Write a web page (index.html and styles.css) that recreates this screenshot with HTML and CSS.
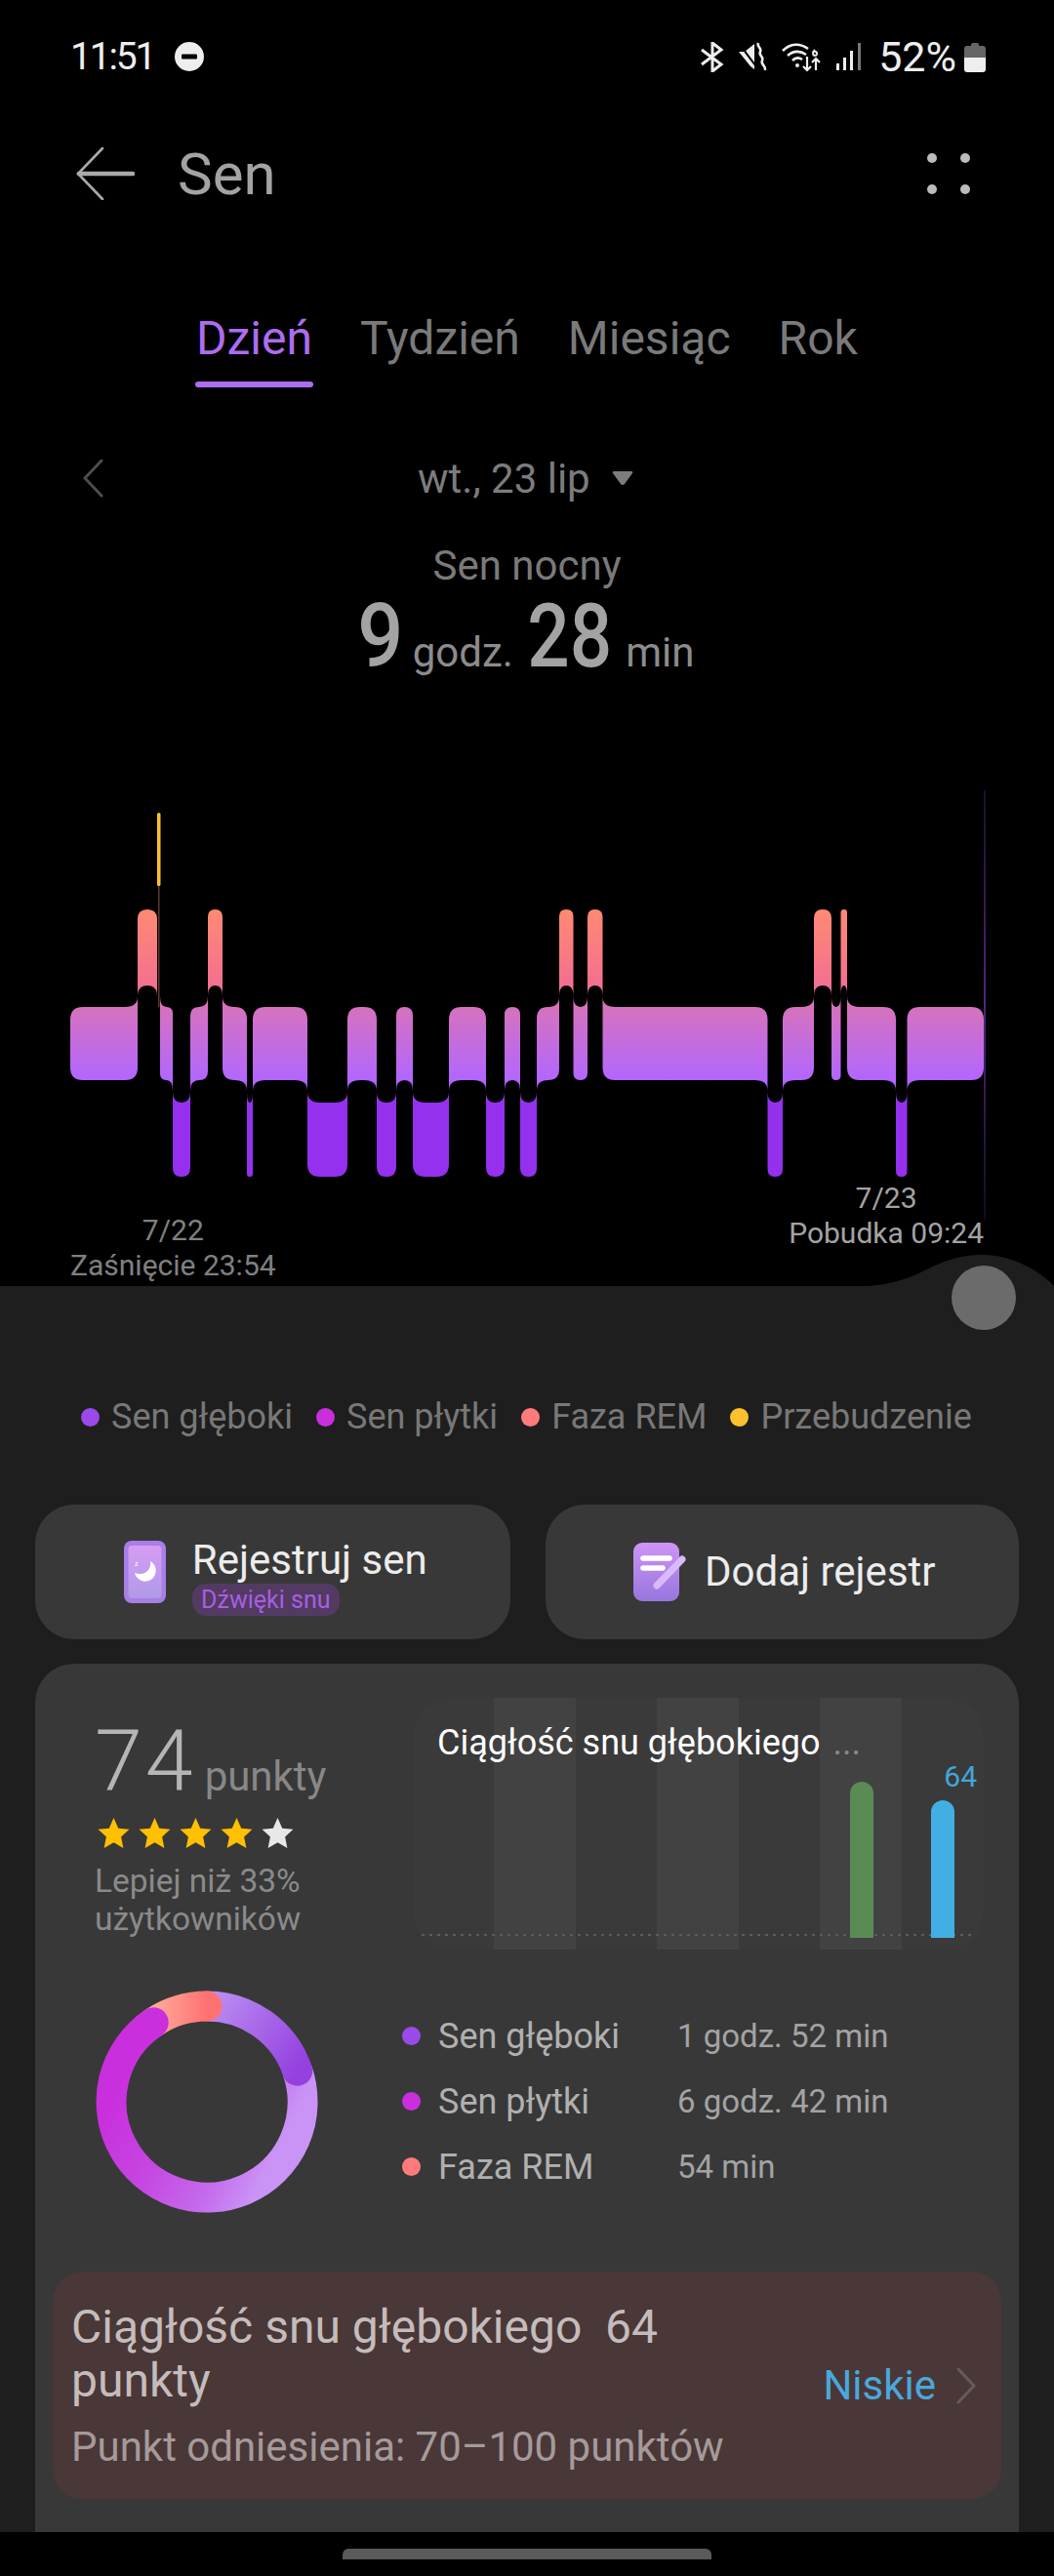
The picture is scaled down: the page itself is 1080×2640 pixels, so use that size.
FILE: index.html
```html
<!DOCTYPE html>
<html lang="pl">
<head>
    <meta charset="UTF-8">
    <meta name="viewport" content="width=device-width, initial-scale=1.0">
    <title>Sen</title>
    <link rel="stylesheet" href="styles.css">
</head>
<body>
<div class="app">

    <!-- pasek stanu -->
    <div class="status">
        <span class="clock">11:51</span>
        <svg class="ic-dnd" width="30" height="30" viewBox="0 0 30 30"><circle cx="15" cy="15" r="15" fill="#eee"/><rect x="7" y="12.5" width="16" height="5" rx="1" fill="#000"/></svg>
        <div class="status-right">
            <svg width="27" height="31" viewBox="0 0 27 31" fill="none" stroke="#eee" stroke-width="3"><path d="M3 8l20 15-9 7V1l9 7L3 23"/></svg>
            <svg width="30" height="30" viewBox="0 0 30 30"><path d="M0 10h6l10-8v26l-4-3z" fill="#eee"/><path d="M2 4l18 24" stroke="#000" stroke-width="2"/><path d="M20 1c-2 4 4 5 2 9s4 5 2 9 4 5 3 10" fill="none" stroke="#eee" stroke-width="2.6"/></svg>
            <svg width="42" height="32" viewBox="0 0 42 32" fill="none" stroke="#eee" stroke-width="2.6"><path d="M1 10c8-8 18-8 26-2M6 15c6-5 13-5 19-1M11 20c3-3 7-3 10-1"/><circle cx="16" cy="25" r="2" fill="#eee" stroke="none"/><path d="M26 16v14m-4-4l4 4 4-4M35 30V18m-4 4l4-4 4 4" stroke-width="2.2"/><path d="M34 9c-3 3-2 6 0 6s3-3 1-4-3 0-3 1" stroke-width="2"/></svg>
            <svg width="26" height="30" viewBox="0 0 26 30"><rect x="0" y="22" width="3" height="7" fill="#eee"/><rect x="7" y="16" width="3" height="13" fill="#eee"/><rect x="14" y="9" width="3" height="20" fill="#eee"/><rect x="22" y="1" width="3" height="28" fill="#777"/></svg>
            <span class="battery-text">52%</span>
            <svg class="ic-battery" width="22" height="31" viewBox="0 0 22 31"><path d="M7 3q0-2 2-2h4q2 0 2 2v1h4q3 0 3 3v9H0V7q0-3 3-3h4z" fill="#666"/><path d="M0 16h22v12q0 3-3 3H3q-3 0-3-3z" fill="#eee"/></svg>
        </div>
    </div>

    <div class="header">
        <svg class="ic-back" width="60" height="54" viewBox="0 0 60 54" fill="none" stroke="#aaa" stroke-linecap="round"><path d="M27 1L2 27l25 26" stroke-width="2.6"/><path d="M3 27h55" stroke-width="4.5"/></svg>
        <span class="header-title">Sen</span>
        <div class="more-dots"><i></i><i></i><i></i><i></i></div>
    </div>

    <div class="tabs">
        <div class="tab active">Dzień</div>
        <div class="tab">Tydzień</div>
        <div class="tab">Miesiąc</div>
        <div class="tab">Rok</div>
    </div>

    <div class="date-row">
        <svg class="ic-prev" width="21" height="40" viewBox="0 0 21 40" fill="none" stroke="#4d4d4d" stroke-width="3" stroke-linecap="round"><path d="M19 2L2 20l17 18"/></svg>
        <span class="date-text">wt., 23 lip</span>
        <svg class="ic-drop" width="22" height="16" viewBox="0 0 22 16"><path d="M2 1h18q2 0 1 2l-8 11q-2 2-4 0L1 3Q0 1 2 1z" fill="#7c7c7c"/></svg>
    </div>

    <div class="sleep-label">Sen nocny</div>
    <div class="sleep-total">
        <span class="big single">9</span><span class="unit">godz.</span><span class="big wide">28</span><span class="unit">min</span>
    </div>

    <svg id="hypnogram" class="hypnogram" width="1080" height="385" viewBox="0 825 1080 385">
        <defs>
            <linearGradient id="stageFill" gradientUnits="userSpaceOnUse" x1="0" y1="932" x2="0" y2="1206">
                <stop offset="0" stop-color="#ff8a72"/>
                <stop offset=".277" stop-color="#f4708f"/>
                <stop offset=".365" stop-color="#d672bd"/>
                <stop offset=".639" stop-color="#b266ff"/>
                <stop offset=".723" stop-color="#9430ee"/>
                <stop offset="1" stop-color="#9430ee"/>
            </linearGradient>
            <linearGradient id="endLine" gradientUnits="userSpaceOnUse" x1="0" y1="810" x2="0" y2="1250">
                <stop offset="0" stop-color="#1a1026"/>
                <stop offset=".5" stop-color="#4a2a80"/>
                <stop offset="1" stop-color="#120b1c"/>
            </linearGradient>
        </defs>
    </svg>

    <div class="axis">
        <div class="axis-start">7/22<br>Zaśnięcie 23:54</div>
        <div class="axis-end">7/23<br>Pobudka 09:24</div>
    </div>

    <div class="panel">
        <svg class="hump" width="200" height="34" viewBox="0 0 200 34"><path d="M0 33C66 33 72 1 128 1c36 0 66 24 72 32v1H0z" fill="#1e1e1e"/></svg>
        <div class="knob"></div>

        <div class="legend">
            <div class="legend-item"><i class="dot deep"></i>Sen głęboki</div>
            <div class="legend-item"><i class="dot light"></i>Sen płytki</div>
            <div class="legend-item"><i class="dot rem"></i>Faza REM</div>
            <div class="legend-item"><i class="dot awake"></i>Przebudzenie</div>
        </div>

        <div class="actions">
            <div class="action record">
                <svg width="43" height="64" viewBox="0 0 43 64">
                    <defs>
                        <linearGradient id="phoneFill" x1="0" y1="0" x2="0" y2="1"><stop offset="0" stop-color="#d79cf4"/><stop offset="1" stop-color="#b09ae8"/></linearGradient>
                    </defs>
                    <rect width="43" height="64" rx="8" fill="#a77fe6"/>
                    <rect x="4.500" y="5" width="34" height="54" rx="4" fill="url(#phoneFill)"/>
                    <path d="M27 21A11 11 0 1 1 11 33Q20 36 25 30Q28 26 27 21z" fill="#fff"/>
                    <text x="11" y="26" font-size="7" font-family="Roboto" fill="#fff">z</text>
                </svg>
                <div class="action-text">
                    <div class="action-title">Rejestruj sen</div>
                    <span class="badge">Dźwięki snu</span>
                </div>
            </div>
            <div class="action note">
                <svg width="54" height="60" viewBox="0 0 54 60">
                    <defs>
                        <linearGradient id="noteFill" x1="0" y1="0" x2="0" y2="1"><stop offset="0" stop-color="#cf94f5"/><stop offset="1" stop-color="#9676de"/></linearGradient>
                    </defs>
                    <rect width="47" height="60" rx="9" fill="url(#noteFill)"/>
                    <path d="M10 16h27M10 26h20" stroke="#fff" stroke-width="5.500" stroke-linecap="round"/>
                    <path d="M24 44l26-27" stroke="#d8b9fb" stroke-width="7" stroke-linecap="round"/>
                </svg>
                <div class="action-title">Dodaj rejestr</div>
            </div>
        </div>

        <div class="card">
            <div class="card-top">
                <div class="score">
                    <div class="score-line"><span class="score-num">74</span><span class="score-unit">punkty</span></div>
                    <div class="stars">
                        <svg width="33" height="33" viewBox="1 1 30 30"><path class="star" d="M16 2l4.300 9.600 10.200 1.100-7.600 7 2.100 10.300-9-5.200L7 30l2.100-10.300-7.600-7 10.200-1.100z"/></svg>
                        <svg width="33" height="33" viewBox="1 1 30 30"><path class="star" d="M16 2l4.300 9.600 10.200 1.100-7.600 7 2.100 10.300-9-5.200L7 30l2.100-10.300-7.600-7 10.200-1.100z"/></svg>
                        <svg width="33" height="33" viewBox="1 1 30 30"><path class="star" d="M16 2l4.300 9.600 10.200 1.100-7.600 7 2.100 10.300-9-5.200L7 30l2.100-10.300-7.600-7 10.200-1.100z"/></svg>
                        <svg width="33" height="33" viewBox="1 1 30 30"><path class="star" d="M16 2l4.300 9.600 10.200 1.100-7.600 7 2.100 10.300-9-5.200L7 30l2.100-10.300-7.600-7 10.200-1.100z"/></svg>
                        <svg width="33" height="33" viewBox="1 1 30 30"><path class="star off" d="M16 2l4.300 9.600 10.200 1.100-7.600 7 2.100 10.300-9-5.200L7 30l2.100-10.300-7.600-7 10.200-1.100z"/></svg>
                    </div>
                    <div class="score-note">Lepiej niż 33%<br>użytkowników</div>
                </div>

                <div class="mini">
                    <div class="mini-strips"><i></i><i></i><i></i></div>
                    <div class="mini-title">Ciągłość snu głębokiego <span class="mini-more">...</span></div>
                    <div class="mini-base"></div>
                    <div class="mini-bar ref"></div>
                    <div class="mini-bar val"></div>
                    <div class="mini-val">64</div>
                </div>
            </div>

            <div class="card-mid">
                <svg class="donut" width="228" height="228" viewBox="-114 -114 228 228" fill="none" stroke-width="31">
                    <defs>
                        <linearGradient id="lightArc" gradientUnits="userSpaceOnUse" x1="98" y1="0" x2="-60" y2="-80"><stop offset="0" stop-color="#ca94f7"/><stop offset=".25" stop-color="#c56cec"/><stop offset=".6" stop-color="#c648e2"/><stop offset="1" stop-color="#c92fdc"/></linearGradient>
                        <linearGradient id="deepArc" gradientUnits="userSpaceOnUse" x1="0" y1="-98" x2="92" y2="-32"><stop offset="0" stop-color="#bb8ef1"/><stop offset="1" stop-color="#9441e0"/></linearGradient>
                        <linearGradient id="remArc" gradientUnits="userSpaceOnUse" x1="-55" y1="0" x2="0" y2="0"><stop offset="0" stop-color="#ffaa9c"/><stop offset="1" stop-color="#ff7272"/></linearGradient>
                    </defs>
                    <path d="M92.700 -31.900A98 98 0 1 1 -54.800 -81.200" stroke="url(#lightArc)"/>
                    <path d="M0 -98A98 98 0 0 1 92.700 -31.900" stroke="url(#deepArc)" stroke-linecap="round"/>
                    <path d="M-54.800 -81.200A98 98 0 0 1 0 -98" stroke="url(#remArc)" stroke-linecap="round"/>
                    <path d="M-63 -75.100A98 98 0 0 1 -54.800 -81.200" stroke="#c92fdc" stroke-linecap="round"/>
                </svg>
                <div class="stage-list">
                    <div class="stage"><i class="dot deep"></i><span class="stage-name">Sen głęboki</span><span class="stage-time">1 godz. 52 min</span></div>
                    <div class="stage"><i class="dot light"></i><span class="stage-name">Sen płytki</span><span class="stage-time">6 godz. 42 min</span></div>
                    <div class="stage"><i class="dot rem"></i><span class="stage-name">Faza REM</span><span class="stage-time">54 min</span></div>
                </div>
            </div>

            <div class="alert">
                <div class="alert-text">
                    <div class="alert-title">Ciągłość snu głębokiego&nbsp; 64 punkty</div>
                    <div class="alert-sub">Punkt odniesienia: 70–100 punktów</div>
                </div>
                <div class="alert-side">
                    <span class="alert-level">Niskie</span>
                    <svg width="20" height="38" viewBox="0 0 20 38" fill="none" stroke="#675b5b" stroke-width="3" stroke-linecap="round"><path d="M2 2l16 17L2 36"/></svg>
                </div>
            </div>
        </div>
    </div>

    <div class="navbar"><div class="home-pill"></div></div>
</div>
<script src="chart.js"></script>
</body>
</html>
```

FILE: styles.css
```css
* {
    box-sizing: border-box;
}

body {
    margin: 0;
    background-color: #000;
    font-family: Roboto, "Liberation Sans", sans-serif;
}

.app {
    width: 1080px;
    height: 2640px;
    overflow: hidden;
}

/* pasek stanu */
.status {
    height: 116px;
    padding: 0 70px 0 72px;
    display: flex;
    align-items: center;
    color: #eee;
}

.clock {
    font-size: 39px;
    letter-spacing: -2.2px;
}

.ic-dnd {
    margin-left: 21px;
}

.status-right {
    margin-left: auto;
    display: flex;
    align-items: center;
    gap: 14px;
}

.battery-text {
    font-size: 43px;
    margin-left: 3px;
}

.ic-battery {
    margin-left: -6px;
}

/* naglowek */
.header {
    height: 124px;
    padding: 0 86px 0 78px;
    display: flex;
    align-items: center;
}

.header-title {
    margin-left: 44px;
    font-size: 60px;
    color: #a3a3a3;
}

.more-dots {
    margin-left: auto;
    display: grid;
    grid-template-columns: 10px 10px;
    gap: 22px 24px;
}

.more-dots i {
    width: 10px;
    height: 10px;
    border-radius: 50%;
    background-color: #bbb;
}

.tabs {
    margin-top: 82px;
    padding-left: 201px;
    display: flex;
    gap: 49px;
}

.tab {
    position: relative;
    height: 75px;
    font-size: 48px;
    line-height: 50px;
    color: #7a7a7a;
}

.tab.active {
    color: #ae6cf0;
}

.tab.active::after {
    content: "";
    position: absolute;
    left: -1px;
    right: -1px;
    bottom: 0;
    height: 6px;
    border-radius: 3px;
    background-color: #ae6cf0;
}

.date-row {
    margin-top: 68px;
    height: 50px;
    padding-left: 85px;
    display: flex;
    align-items: center;
}

.date-text {
    margin-left: 322px;
    font-size: 42px;
    color: #7c7c7c;
}

.ic-drop {
    margin-left: 22px;
}

.sleep-label {
    margin-top: 40px;
    text-align: center;
    font-size: 42px;
    line-height: 50px;
    color: #7a7a7a;
}

.sleep-total {
    margin-top: 2px;
    height: 90px;
    padding-left: 14px;
    line-height: 90px;
    text-align: center;
    color: #8c8c8c;
}

.big {
    display: inline-block;
    font-size: 91px;
    font-weight: 500;
    color: #a3a3a3;
    transform: scaleX(.84);
}

.big.single {
    transform: scaleX(.91);
    margin: 0 -7.500px 0 -4px;
}

.big.wide {
    margin: 0 -8px;
}

.unit {
    font-size: 42px;
    margin: 0 14px;
}

.hypnogram {
    display: block;
    margin-top: 128px;
    overflow: visible;
}

.axis {
    height: 108px;
    padding: 0 72px;
    display: flex;
    justify-content: space-between;
    font-size: 30px;
    line-height: 36px;
    text-align: center;
}

.axis-start {
    padding-top: 33px;
    color: #808080;
}

.axis-end {
    color: #a3a3a3;
}

/* dolny panel */
.panel {
    position: relative;
    height: 1277px;
    background-color: #1e1e1e;
    padding: 109px 36px 0;
}

.hump {
    position: absolute;
    right: 0;
    top: -33px;
}

.knob {
    position: absolute;
    left: 975px;
    top: -21px;
    width: 66px;
    height: 66px;
    border-radius: 50%;
    background-color: #6b6b6b;
}

.dot {
    display: block;
    flex: none;
    width: 19px;
    height: 19px;
    border-radius: 50%;
}

.dot.deep { background-color: #9a4ae8; }
.dot.light { background-color: #c92fdc; }
.dot.rem { background-color: #ff7b7b; }
.dot.awake { background-color: #fdc12d; }

.legend {
    height: 50px;
    padding-left: 47px;
    display: flex;
    align-items: center;
    gap: 24px;
    font-size: 36px;
    color: #787878;
}

.legend-item {
    display: flex;
    align-items: center;
    gap: 12px;
}

.actions {
    margin-top: 65px;
    display: flex;
    gap: 36px;
}

.action {
    flex: 1;
    height: 138px;
    border-radius: 40px;
    background-color: #383838;
    display: flex;
    align-items: center;
    justify-content: center;
}

.action.record {
    gap: 27px;
    padding-left: 6px;
}

.action.note {
    gap: 19px;
    padding-left: 5px;
}

.action-title {
    font-size: 42px;
    line-height: 50px;
    color: #ececec;
}

.action-text {
    padding-top: 8px;
}

.badge {
    display: block;
    width: 151px;
    height: 33px;
    margin-top: -1px;
    border-radius: 14px;
    background-color: #533a62;
    color: #a75fe0;
    font-size: 25px;
    line-height: 33px;
    text-align: center;
}

.card {
    margin-top: 25px;
    height: 890px;
    padding: 35px 18px 0;
    border-radius: 40px 40px 0 0;
    background-color: #383838;
}

.card-top {
    padding: 0 19px 0 43px;
    display: flex;
    justify-content: space-between;
}

.score-line {
    margin-top: 25px;
    height: 80px;
    line-height: 80px;
    white-space: nowrap;
}

.score-num {
    font-size: 88px;
    font-weight: 300;
    letter-spacing: 3px;
    color: #b5b5b5;
}

.score-unit {
    margin-left: 9px;
    font-size: 42px;
    color: #888;
}

.stars {
    margin-top: 17px;
    padding-left: 3px;
    display: flex;
    gap: 9px;
}

.star {
    fill: #ffc000;
}

.star.off {
    fill: #e8e8e8;
}

.score-note {
    margin-top: 13px;
    font-size: 33.500px;
    line-height: 39px;
    color: #8a8a8a;
}

.mini {
    position: relative;
    width: 583px;
    height: 258px;
    border-radius: 36px;
    overflow: hidden;
    background-color: #3a3a3a;
}

.mini-strips {
    height: 100%;
    padding-left: 82px;
    display: flex;
    gap: 83px;
}

.mini-strips i {
    width: 84px;
    background-color: #424242;
}

.mini-title {
    position: absolute;
    left: 24px;
    top: 26px;
    font-size: 36px;
    line-height: 40px;
    color: #fff;
    white-space: nowrap;
}

.mini-more {
    color: #888;
    margin-left: 4px;
}

.mini-base {
    position: absolute;
    left: 8px;
    right: 7px;
    bottom: 14px;
    height: 2px;
    background-image: repeating-linear-gradient(90deg, #5c5c5c 0, #5c5c5c 3px, transparent 3px, transparent 8px);
}

.mini-bar {
    position: absolute;
    bottom: 12px;
    width: 24px;
    border-radius: 12px 12px 0 0;
}

.mini-bar.ref {
    left: 447px;
    height: 160px;
    background-color: #5a8b55;
}

.mini-bar.val {
    left: 530px;
    height: 141px;
    background-color: #43aee3;
}

.mini-val {
    position: absolute;
    right: 6px;
    top: 66px;
    font-size: 30px;
    line-height: 30px;
    color: #43a5d8;
}

.card-mid {
    margin-top: 42px;
    padding-left: 44px;
    display: flex;
}

.stage-list {
    margin-left: 86px;
    padding-top: 13px;
}

.stage {
    height: 67px;
    display: flex;
    align-items: center;
}

.stage-name {
    width: 245px;
    margin-left: 18px;
    font-size: 36px;
    color: #b0b0b0;
}

.stage-time {
    font-size: 33px;
    color: #a3a3a3;
}

.alert {
    margin-top: 60px;
    height: 233px;
    padding: 0 26px 0 19px;
    border-radius: 30px;
    background-color: #4a3737;
    display: flex;
    align-items: center;
    justify-content: space-between;
}

.alert-title {
    max-width: 640px;
    font-size: 48px;
    line-height: 55px;
    color: #c4bcbc;
}

.alert-sub {
    margin-top: 16px;
    font-size: 42px;
    line-height: 50px;
    white-space: nowrap;
    color: #a59a9a;
}

.alert-side {
    display: flex;
    align-items: center;
    gap: 21px;
}

.alert-level {
    font-size: 42px;
    color: #4aa8dc;
}

.navbar {
    height: 45px;
    padding-top: 17px;
    background-color: #000;
}

.home-pill {
    width: 378px;
    height: 11px;
    margin-left: 351px;
    border-radius: 6px 6px 0 0;
    background-color: #5a5a5a;
}
```

FILE: chart.js
```js
// fazy snu: 2 = REM, 1 = plytki, 0 = gleboki, kolejne granice x na wykresie
const LEVELS = {
    2: [932, 1010],
    1: [1032, 1107],
    0: [1130, 1206]
};
const FLARE = 11;
const NS = 'http://www.w3.org/2000/svg';

const segments = [
    [72, 141, 1], [141, 161, 2], [164, 177, 1], [177, 195, 0], [195, 213, 1], [213, 228, 2],
    [228, 253, 1], [253, 259, 0], [259, 315, 1], [315, 356, 0], [356, 386, 1], [386, 406, 0],
    [406, 423, 1], [423, 460, 0], [460, 498, 1], [498, 517, 0], [517, 533, 1], [533, 550, 0],
    [550, 573, 1], [573, 587.5, 2], [587.5, 602, 1], [602, 617.5, 2], [617.5, 786.5, 1],
    [786.5, 802, 0], [802, 834, 1], [834, 852, 2], [852, 861.5, 1], [861.5, 868, 2],
    [868, 918, 1], [918, 929.5, 0], [929.5, 1008, 1]
];

function add(svg, tag, attrs) {
    const el = document.createElementNS(NS, tag);
    Object.keys(attrs).forEach(k => el.setAttribute(k, attrs[k]));
    svg.appendChild(el);
}

function stagePath(seg, prev, next) {
    const [x0, x1, lvl] = seg;
    const [top, bot] = LEVELS[lvl];
    const r = Math.min(13, (x1 - x0) / 2);
    const left = prev ? prev[2] : lvl;
    const right = next ? next[2] : lvl;
    // sasiad wyzej lub nizej: rog rozszerza sie w jego strone
    const tl = left > lvl ? top - FLARE : top + r;
    const tr = right > lvl ? top - FLARE : top + r;
    const bl = left < lvl ? bot + FLARE : bot - r;
    const br = right < lvl ? bot + FLARE : bot - r;
    return `M${x0} ${tl}Q${x0} ${top} ${x0 + r} ${top}L${x1 - r} ${top}Q${x1} ${top} ${x1} ${tr}` +
        `L${x1} ${br}Q${x1} ${bot} ${x1 - r} ${bot}L${x0 + r} ${bot}Q${x0} ${bot} ${x0} ${bl}Z`;
}

const chart = document.getElementById('hypnogram');
add(chart, 'rect', { x: 1008, y: 810, width: 2, height: 440, fill: 'url(#endLine)' });
segments.forEach((seg, i) => {
    add(chart, 'path', { d: stagePath(seg, segments[i - 1], segments[i + 1]), fill: 'url(#stageFill)' });
});
// przebudzenie
add(chart, 'rect', { x: 162, y: 908, width: 1.5, height: 124, fill: '#5a3a30' });
add(chart, 'rect', { x: 161, y: 833, width: 3.5, height: 75, rx: 1.5, fill: '#fbbf35' });
```
